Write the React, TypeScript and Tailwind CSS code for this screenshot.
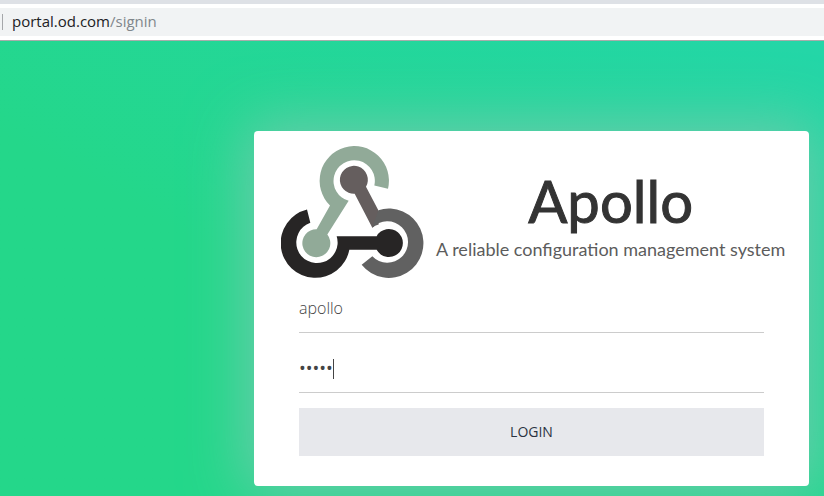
import { useState } from "react";

function AddressBar() {
  return (
    <header className="border-b border-[#a9acab] bg-white">
      <div className="h-1 bg-[#dee1e6]" />
      <div className="my-1 flex h-7 items-center bg-[#f1f3f4] pl-0.5">
        <div className="h-4 w-px bg-[#a5a7aa]" />
        <p className="pb-0.5 pl-[9px] text-[15px] leading-6 text-[#202124]">
          portal.od.com<span className="text-[#80868b]">/signin</span>
        </p>
      </div>
    </header>
  );
}

function ApolloMark() {
  return (
    <svg viewBox="33 46 429 398" className="h-[133px] w-[143px] shrink-0" aria-hidden="true">
      <path
        fill="#91aa98"
        d="M354 177A104 104 0 1 0 180 227L140 298A42 42 0 1 0 172 314L236 213A62 62 0 1 1 313 167Z"
      />
      <path
        fill="#655e5e"
        d="M325 241L288 171A42 42 0 1 0 254 192L307 294Q314 287 326 284Z"
      />
      <path
        fill="#616161"
        d="M325 241A104 104 0 1 1 275 405L307 379A62 62 0 1 0 307 294Z"
      />
      <path
        fill="#272525"
        d="M111 239A104 104 0 1 0 238 360L320 360A42 42 0 1 0 320 319L200 319A62 62 0 1 1 121 279Z"
      />
    </svg>
  );
}

function Brand() {
  return (
    <div className="flex justify-between gap-3 pt-3.5 pr-7 pl-[27px]">
      <ApolloMark />
      <div className="flex flex-1 flex-col items-center pt-6 whitespace-nowrap">
        <h1 className="font-['Lato',sans-serif] text-[58px] leading-[64px] text-[#333333] [-webkit-text-stroke:1px_#333333]">
          Apollo
        </h1>
        <p className="font-['Lato',sans-serif] text-[18px] leading-8 text-[#5c5c5c]">
          A reliable configuration management system
        </p>
      </div>
    </div>
  );
}

const fieldStyle =
  "block h-[55px] w-full border-b border-[#cccccc] bg-transparent pt-1.5 text-[#444444] outline-none";

export default function App() {
  const [user, setUser] = useState("apollo");
  const [password, setPassword] = useState("admin");

  return (
    <div className="flex min-h-screen flex-col font-['Open_Sans',sans-serif]">
      <AddressBar />
      <main className="flex flex-1 items-start justify-end bg-linear-to-tr from-[#24d78a] from-40% to-[#24d6a8] pt-[90px] pr-[15px] pb-2.5">
        <form
          className="w-full max-w-[555px] rounded bg-white pb-[30px] shadow-[0_0_60px_8px_#6cccac]"
          onSubmit={(event) => event.preventDefault()}
        >
          <Brand />
          <div className="px-[45px]">
            <input
              aria-label="Username"
              className={`${fieldStyle} text-base font-light`}
              value={user}
              onChange={(event) => setUser(event.target.value)}
            />
            <div className="relative mt-[5px]">
              <input
                aria-label="Password"
                type="password"
                className={`${fieldStyle} text-lg`}
                value={password}
                onChange={(event) => setPassword(event.target.value)}
              />
              <span className="absolute top-[21px] left-[34px] h-5 w-px bg-[#444444]" />
            </div>
            <button type="submit" className="mt-[15px] h-12 w-full bg-[#e7e8ec] text-sm text-[#2b3342]">
              LOGIN
            </button>
          </div>
        </form>
      </main>
    </div>
  );
}
